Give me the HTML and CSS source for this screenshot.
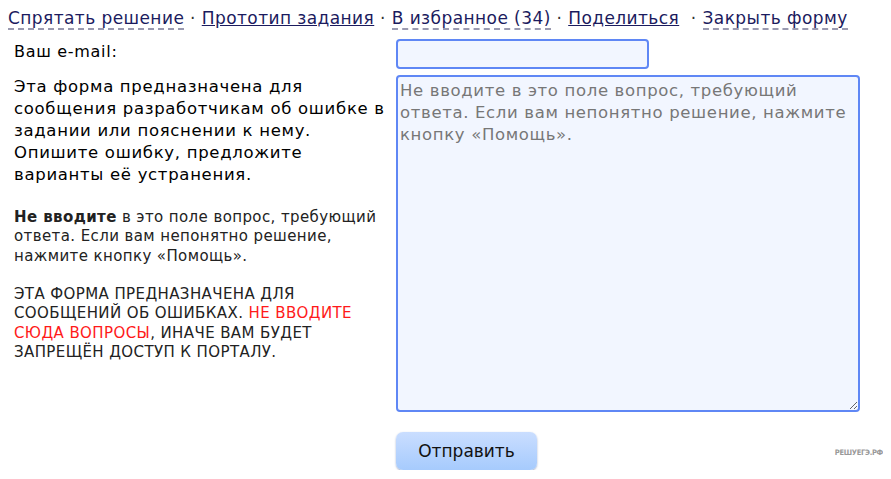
FILE: index.html
```html
<!DOCTYPE html>
<html lang="ru">
<head>
    <meta charset="UTF-8">
    <meta name="viewport" content="width=device-width, initial-scale=1.0">
    <title>Сообщить об ошибке</title>
    <link rel="stylesheet" href="styles.css">
</head>
<body>
    <div class="task-links">
        <span class="dash-link">Спрятать решение</span> ·
        <a href="#" class="solid-link">Прототип задания</a> ·
        <span class="dash-link">В избранное (34)</span> ·
        <a href="#" class="solid-link">Поделиться</a>&nbsp; ·
        <span class="dash-link">Закрыть форму</span>
    </div>

    <form class="report-form">
        <label class="field-label" for="email">Ваш e-mail:</label>
        <input type="text" id="email" class="email-input">

        <div class="form-info">
            <p class="info-main">Эта форма предназначена для сообщения разработчикам об ошибке в задании или пояснении к нему. Опишите ошибку, предложите варианты её устранения.</p>
            <p class="info-note"><b>Не вводите</b> в это поле вопрос, требующий ответа. Если вам непонятно решение, нажмите кнопку «Помощь».<br><br>ЭТА ФОРМА ПРЕДНАЗНАЧЕНА ДЛЯ СООБЩЕНИЙ ОБ ОШИБКАХ. <span class="warn">НЕ ВВОДИТЕ СЮДА ВОПРОСЫ</span>, ИНАЧЕ ВАМ БУДЕТ ЗАПРЕЩЁН ДОСТУП К ПОРТАЛУ.</p>
        </div>
        <textarea class="message-input" placeholder="Не вводите в это поле вопрос, требующий&#10;ответа. Если вам непонятно решение, нажмите&#10;кнопку «Помощь»."></textarea>

        <div></div>
        <div class="submit-row">
            <button type="submit" class="submit-btn">Отправить</button>
            <span class="site-mark">РЕШУЕГЭ.РФ</span>
        </div>
    </form>
</body>
</html>
```

FILE: styles.css
```css
body {
    font-family: "DejaVu Sans", Verdana, sans-serif;
    margin: 8px;
    background: white;
    color: black;
}

.task-links {
    font-size: 17px;
    line-height: 20px;
    letter-spacing: 0.42px;
    color: #333;
    white-space: nowrap;
}

.dash-link {
    color: #1b1b5e;
    border-bottom: 2px dashed #9a9ab0;
}

.solid-link {
    color: #1b1b5e;
    text-decoration: underline;
}

.report-form {
    display: grid;
    grid-template-columns: 388px 464px;
    grid-template-rows: 30px 337px auto;
    row-gap: 6px;
    margin-top: 11px;
}

.field-label {
    padding-left: 6px;
    font-size: 16px;
    line-height: 22px;
    letter-spacing: 0.7px;
    align-self: center;
    margin-top: -4px;
}

.email-input {
    width: 253px;
    height: 30px;
    box-sizing: border-box;
    border: 2px solid #5f87f5;
    border-radius: 4px;
    background: #f2f6ff;
    outline: none;
}

.form-info {
    padding: 1px 6px 0 6px;
}

.info-main {
    margin: 0;
    font-size: 16.5px;
    line-height: 22px;
    letter-spacing: 0.69px;
}

.info-note {
    margin: 22px 0 0 0;
    font-size: 15px;
    line-height: 19.3px;
    letter-spacing: 0.4px;
    color: #222;
}

.warn {
    color: #ff1a1a;
}

.message-input {
    width: 464px;
    height: 337px;
    box-sizing: border-box;
    margin: 0;
    padding: 3px 2px;
    border: 2px solid #5f87f5;
    border-radius: 4px;
    background: #f2f6ff;
    font-family: "DejaVu Sans", Verdana, sans-serif;
    font-size: 16.5px;
    line-height: 22px;
    letter-spacing: 0.65px;
    outline: none;
    resize: vertical;
}

.message-input::placeholder {
    color: #777;
}

.submit-row {
    display: flex;
    align-items: center;
    justify-content: space-between;
    margin-top: 14px;
    width: 487px;
}

.submit-btn {
    width: 141px;
    height: 38px;
    border: none;
    border-radius: 7px;
    background: linear-gradient(#cadeff, #a6cbfd);
    box-shadow: 0 1px 2px rgba(40, 70, 140, 0.45);
    font-family: "DejaVu Sans", Verdana, sans-serif;
    font-size: 17px;
    color: #111;
    cursor: pointer;
}

.site-mark {
    font-family: "DejaVu Sans Condensed", "DejaVu Sans", sans-serif;
    font-size: 7.5px;
    font-weight: bold;
    letter-spacing: -0.3px;
    color: #999;
    margin-top: 2px;
}
```
